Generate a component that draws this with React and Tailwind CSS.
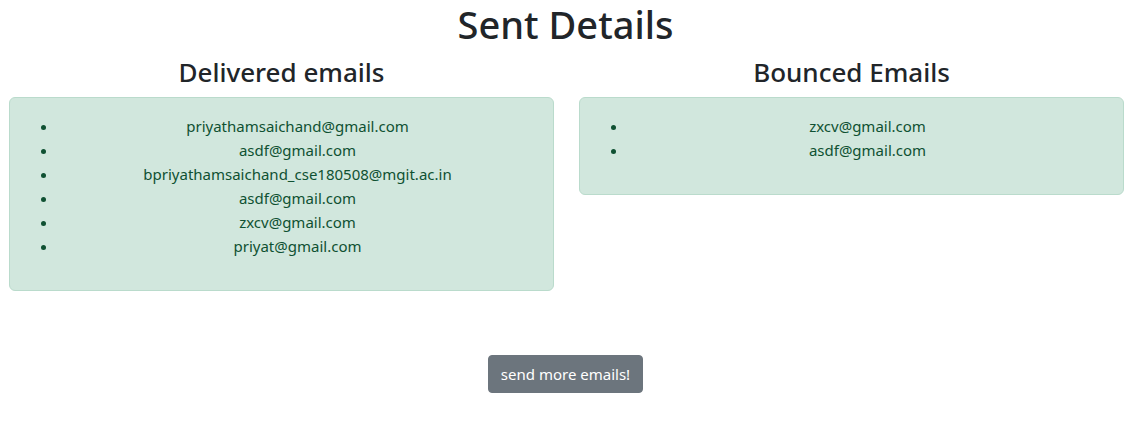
const delivered = [
  'priyathamsaichand@gmail.com',
  'asdf@gmail.com',
  'bpriyathamsaichand_cse180508@mgit.ac.in',
  'asdf@gmail.com',
  'zxcv@gmail.com',
  'priyat@gmail.com',
]

const bounced = ['zxcv@gmail.com', 'asdf@gmail.com']

function EmailList({ title, emails }) {
  return (
    <div className="flex-1 min-w-0">
      <h3 className="text-[26px] leading-[33px] font-medium text-center mb-2">{title}</h3>
      <div className="bg-[#d1e7dd] border border-[#badbcc] rounded-[6px] p-4 text-[#0f5132]">
        <ul className="list-disc pl-8 mb-4">
          {emails.map((email, i) => (
            <li key={i} className="text-center text-[15px] leading-6">
              {email}
            </li>
          ))}
        </ul>
      </div>
    </div>
  )
}

export default function App() {
  return (
    <div className="bg-white text-[#212529] font-['Noto_Sans',sans-serif] min-h-[435px] pt-px">
      <h1 className="text-[38px] leading-[47px] font-medium text-center mb-2">Sent Details</h1>
      <div className="flex gap-[25px] pl-[9px] pr-[7px]">
        <EmailList title="Delivered emails" emails={delivered} />
        <EmailList title="Bounced Emails" emails={bounced} />
      </div>
      <div className="flex justify-center mt-16">
        <button className="bg-[#6c757d] text-white text-[15px] leading-6 px-3 py-1.5 rounded-[4px] border border-[#6c757d]">
          send more emails!
        </button>
      </div>
    </div>
  )
}
